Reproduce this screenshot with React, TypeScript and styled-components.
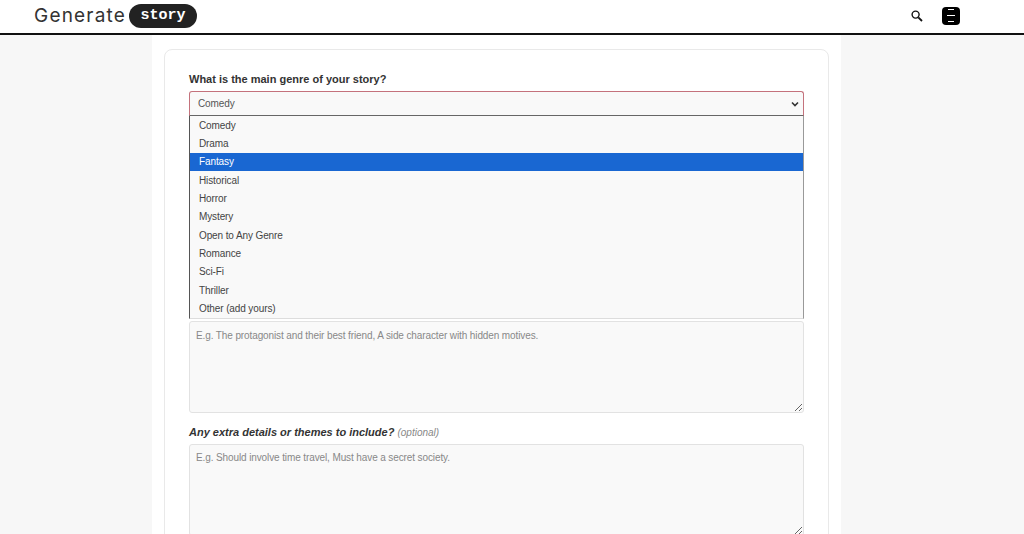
import React, { FC } from 'react';
import styled, { createGlobalStyle } from 'styled-components';

const genres = [
  'Comedy',
  'Drama',
  'Fantasy',
  'Historical',
  'Horror',
  'Mystery',
  'Open to Any Genre',
  'Romance',
  'Sci-Fi',
  'Thriller',
  'Other (add yours)',
];

const GlobalStyle = createGlobalStyle`
  html, body {
    margin: 0;
    height: 534px;
    overflow: hidden;
    background: #f7f7f7;
    font-family: "Liberation Sans", Arial, sans-serif;
  }
  * { box-sizing: border-box; }
`;

const Header = styled.header`
  align-items: center;
  background: #fff;
  border-bottom: 2px solid #111;
  display: flex;
  height: 35px;
  justify-content: space-between;
  padding: 0 64px 2px 34px;
`;

const Logo = styled.div`
  align-items: center;
  display: flex;
  gap: 3px;
`;

const LogoWord = styled.span`
  color: #333;
  font-family: Inter, sans-serif;
  font-size: 19px;
  letter-spacing: 1.2px;
`;

const LogoPill = styled.span`
  background: #222;
  border-radius: 12px;
  color: #fff;
  font-family: "Liberation Mono", monospace;
  font-size: 15px;
  font-weight: 700;
  height: 24px;
  line-height: 23px;
  padding: 0 11px;
  text-align: center;
  width: 68px;
`;

const Actions = styled.div`
  align-items: center;
  display: flex;
  gap: 19px;
`;

const MenuButton = styled.div`
  align-items: center;
  background: #000;
  border-radius: 4px;
  display: flex;
  flex-direction: column;
  gap: 5px;
  height: 18px;
  justify-content: center;
  width: 18px;
`;

const MenuLine = styled.span<{ $short?: boolean }>`
  background: #fff;
  height: 1px;
  width: ${(p) => (p.$short ? 6 : 8)}px;
`;

const Main = styled.main`
  background: #fff;
  height: 499px;
  margin: 0 183px 0 152px;
  overflow: hidden;
  padding: 14px 12px 0;
`;

const Card = styled.div`
  border: 1px solid #e9e9e9;
  border-radius: 8px;
  height: 520px;
  padding: 22px 24px 0;
`;

const Field = styled.div<{ $gap?: number }>`
  display: flex;
  flex-direction: column;
  margin-bottom: ${(p) => p.$gap ?? 12}px;
  position: relative;
`;

const Label = styled.label`
  color: #333;
  font-size: 11px;
  font-weight: 700;
  line-height: 14px;
  margin-bottom: 5px;
`;

const ItalicLabel = styled(Label)`
  font-style: italic;
  margin-bottom: 4px;
`;

const Optional = styled.span`
  color: #888;
  font-size: 10px;
  font-weight: 400;
`;

const SelectBox = styled.div`
  align-items: center;
  background: #f9f9f9;
  border: 1px solid #c4727c;
  border-bottom-color: #666;
  border-radius: 3px 3px 0 0;
  color: #555;
  display: flex;
  font-size: 10px;
  height: 25px;
  justify-content: space-between;
  letter-spacing: -0.11px;
  padding: 0 4px 0 8px;
`;

const Dropdown = styled.ul`
  background: #f9f9f9;
  border: 1px solid #999;
  border-bottom-color: #ddd;
  border-left-color: #555;
  border-top: 0;
  left: 0;
  list-style: none;
  margin: 0;
  padding: 0 0 1px;
  position: absolute;
  right: 0;
  top: 44px;
  z-index: 2;
`;

const Option = styled.li<{ $active?: boolean }>`
  background: ${(p) => (p.$active ? '#1967d2' : 'transparent')};
  color: ${(p) => (p.$active ? '#fff' : '#444')};
  font-size: 10px;
  height: 18.3px;
  letter-spacing: -0.11px;
  line-height: ${(p) => (p.$active ? 18 : 19)}px;
  padding-left: 9px;
`;

const TextArea = styled.textarea<{ $padTop?: number }>`
  background: #f9f9f9;
  border: 1px solid #e2e2e2;
  border-radius: 3px;
  color: #444;
  display: block;
  font-family: "Liberation Sans", Arial, sans-serif;
  font-size: 10px;
  height: 92px;
  letter-spacing: -0.11px;
  line-height: 12px;
  outline: none;
  padding: ${(p) => p.$padTop ?? 8}px 6px 8px;
  width: 100%;

  &::placeholder {
    color: #888;
    opacity: 1;
  }
`;

const SearchIcon: FC = () => (
  <svg width="12" height="12" viewBox="0 0 12 12" fill="none" stroke="#111">
    <circle cx="4.6" cy="4.6" r="3.5" strokeWidth="1.4" />
    <path d="M7.3 7.3 11 11" strokeWidth="1.8" />
  </svg>
);

const Chevron: FC = () => (
  <svg width="8" height="6" viewBox="0 0 8 6" fill="none" stroke="#333" strokeWidth="1.6">
    <path d="M1 1.5 4 4.5 7 1.5" />
  </svg>
);

const App: FC = () => (
  <>
    <GlobalStyle />
    <Header>
      <Logo>
        <LogoWord>Generate</LogoWord>
        <LogoPill>story</LogoPill>
      </Logo>
      <Actions>
        <SearchIcon />
        <MenuButton>
          <MenuLine $short />
          <MenuLine />
          <MenuLine $short />
        </MenuButton>
      </Actions>
    </Header>
    <Main>
      <Card>
        <Field $gap={205}>
          <Label>What is the main genre of your story?</Label>
          <SelectBox>
            Comedy
            <Chevron />
          </SelectBox>
          <Dropdown>
            {genres.map((genre) => (
              <Option key={genre} $active={genre === 'Fantasy'}>
                {genre}
              </Option>
            ))}
          </Dropdown>
        </Field>
        <Field $gap={12}>
          <TextArea placeholder="E.g. The protagonist and their best friend, A side character with hidden motives." />
        </Field>
        <Field>
          <ItalicLabel>
            Any extra details or themes to include? <Optional>(optional)</Optional>
          </ItalicLabel>
          <TextArea
            $padTop={7}
            placeholder="E.g. Should involve time travel, Must have a secret society."
          />
        </Field>
      </Card>
    </Main>
  </>
);

export default App;
